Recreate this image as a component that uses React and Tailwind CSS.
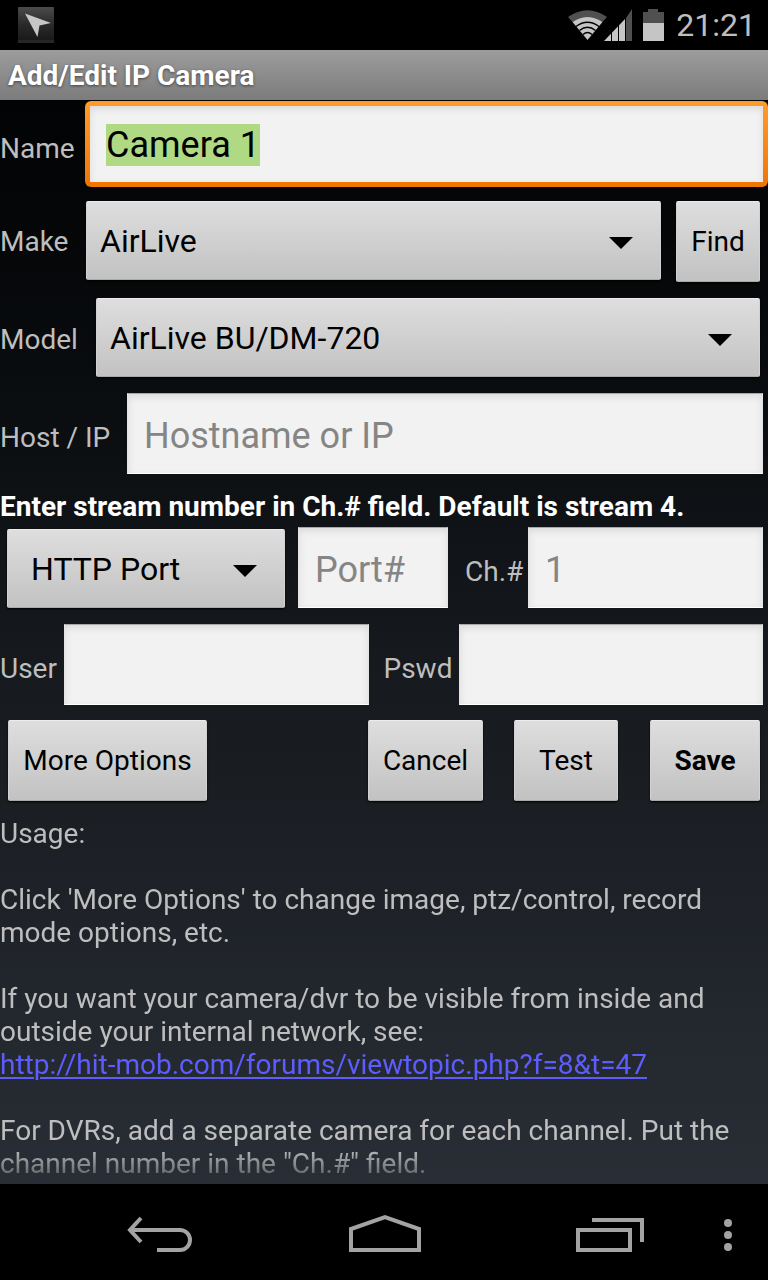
import { useEffect, useRef } from "react";
import clsx from "clsx";

const raised =
  "rounded-xs border border-t-[#eeeaee] border-x-[#d2d2d2] border-b-[#aaa] bg-linear-to-b from-[#dedede] to-[#c2c2c2] text-black shadow-[0_1px_2px_#000]";

const field =
  "h-[81px] min-w-0 border border-t-[#a8a8a8] border-x-[#e4e4e4] border-b-white bg-[#f2f2f2] px-4 pt-1 text-4xl text-black shadow-[inset_0_3px_7px_#dadada] outline-none placeholder:text-[#858585]";

function Label({ htmlFor, className, children }) {
  return (
    <label htmlFor={htmlFor} className={clsx("shrink-0 leading-[33px]", className)}>
      {children}
    </label>
  );
}

function Spinner({ id, label, options, className, selectClass }) {
  return (
    <div className={clsx("relative", className)}>
      <select
        id={id}
        aria-label={label}
        className={clsx("block h-[79px] w-full appearance-none pt-0.5 text-[32px] outline-none", raised, selectClass)}
      >
        {options.map((option) => (
          <option key={option}>{option}</option>
        ))}
      </select>
      <svg
        className="pointer-events-none absolute top-9 right-7 h-3 w-6"
        viewBox="0 0 24 12"
        aria-hidden="true"
      >
        <path d="M0 0H24L12 12Z" fill="#000" />
      </svg>
    </div>
  );
}

function Button({ className, children }) {
  return (
    <button type="button" className={clsx("h-[81px] shrink-0 text-center", raised, className)}>
      {children}
    </button>
  );
}

function StatusBar() {
  return (
    <header className="flex h-[50px] shrink-0 items-center bg-black pr-3 pl-[18px]">
      <svg className="size-9" viewBox="0 0 36 36" aria-hidden="true">
        <defs>
          <linearGradient id="tile" x2="0" y2="1">
            <stop stopColor="#4b4b4b" />
            <stop offset=".5" stopColor="#292929" />
            <stop offset="1" stopColor="#171717" />
          </linearGradient>
        </defs>
        <rect width="36" height="36" rx="1" fill="url(#tile)" />
        <rect y="33" width="36" height="3" fill="#262626" />
        <path d="M7 6.500L33 16L21.500 18.500L19.500 30Z" fill="#c6c6c6" />
      </svg>
      <svg className="ml-auto h-8 w-24" viewBox="0 0 96 32" aria-hidden="true">
        <path d="M0 8Q19.500 -5.500 39 8L34.500 13Q19.500 3 4.500 13Z" fill="#505050" />
        <path d="M4.500 13Q19.500 3 34.500 13L19.500 31Z" fill="#c5c5c5" />
        <path
          d="M8 17.500Q19.500 9 31 17.500M11.500 21.500Q19.500 15 27.500 21.500M15 25.500Q19.500 21.500 24 25.500"
          fill="none"
          stroke="#000"
          strokeWidth="1.500"
        />
        <path d="M36 32L57 10V32Z" fill="#c5c5c5" />
        <path d="M58 9L64 0V32H58Z" fill="#505050" />
        <path d="M43.500 23V32M50.500 16V32M57.500 9V32" stroke="#000" strokeWidth="1" />
        <path d="M75 3H80V0H90V3H96V14H75Z" fill="#505050" />
        <path d="M75 14H96V32H75Z" fill="#c5c5c5" />
      </svg>
      <time className="ml-3 text-[32px] leading-9 text-[#bebebe]">21:21</time>
    </header>
  );
}

function NavBar() {
  return (
    <nav className="flex h-24 shrink-0 items-center bg-black pt-1 pr-5 pl-[126px]">
      <div className="flex grow justify-between">
        <button type="button" aria-label="Back">
          <svg className="h-10 w-[68px]" viewBox="0 0 68 40" fill="none" stroke="#a3a3a3" strokeWidth="4">
            <path d="M4 16H54A10 10 0 0 1 54 36H31" />
            <path d="M15 4L4 16L15 28" />
          </svg>
        </button>
        <button type="button" aria-label="Home">
          <svg className="h-10 w-[72px]" viewBox="0 0 72 40" fill="none" stroke="#a3a3a3" strokeWidth="4">
            <path d="M2 36V15L36 3L70 15V36Z" />
          </svg>
        </button>
        <button type="button" aria-label="Recent apps">
          <svg className="h-10 w-[68px]" viewBox="0 0 68 40" fill="none" stroke="#a3a3a3" strokeWidth="4">
            <path d="M2 14H54V34H2ZM16 4H66V26" transform="translate(0 2)" />
          </svg>
        </button>
      </div>
      <button type="button" aria-label="Menu" className="ml-16 flex w-10 justify-center">
        <svg className="h-9 w-2" viewBox="0 0 8 36" fill="#a3a3a3">
          <circle cx="4" cy="7" r="4" />
          <circle cx="4" cy="19" r="4" />
          <circle cx="4" cy="31" r="4" />
        </svg>
      </button>
    </nav>
  );
}

export default function App() {
  const nameRef = useRef(null);

  useEffect(() => {
    nameRef.current.focus();
    nameRef.current.select();
  }, []);

  return (
    <div className="flex min-h-screen flex-col bg-black font-[Roboto,sans-serif] text-[28px] leading-[33px] text-[#bebebe]">
      <StatusBar />
      <h1 className="flex h-[50px] shrink-0 items-center bg-linear-to-b from-[#9c9c9c] to-[#7c7c7c] px-2 font-bold text-white text-shadow-[0_1px_3px_#444]">
        Add/Edit IP Camera
      </h1>
      <main className="flex grow flex-col bg-linear-to-b from-[#020304] via-[#15181c] to-[#292e36]">
        <form className="flex flex-col" onSubmit={(e) => e.preventDefault()}>
          <div className="flex items-center pt-px">
            <Label htmlFor="name" className="w-[85px] pt-2">Name</Label>
            <div className="min-w-0 grow rounded-md bg-linear-to-b from-[#ff9c2a] to-[#f07400] p-[5px]">
              <input
                id="name"
                ref={nameRef}
                defaultValue="Camera 1"
                className="block h-[76px] w-full bg-[#f2f2f2] px-4 pt-0.5 text-4xl text-black shadow-[inset_0_3px_7px_#dadada] outline-none selection:bg-[#b0d984] selection:text-black"
              />
            </div>
          </div>

          <div className="mt-[14px] flex items-start pr-2">
            <Label htmlFor="make" className="w-[86px] self-center">Make</Label>
            <Spinner id="make" options={["AirLive"]} className="min-w-0 grow" selectClass="pl-[13px]" />
            <Button className="ml-[15px] w-[84px]">Find</Button>
          </div>

          <div className="mt-4 flex items-center pr-2">
            <Label htmlFor="model" className="w-24 pt-1">Model</Label>
            <Spinner id="model" options={["AirLive BU/DM-720"]} className="min-w-0 grow" selectClass="pl-[13px]" />
          </div>

          <div className="mt-4 flex items-center pr-[5px]">
            <Label htmlFor="host" className="w-[127px] pt-2">Host / IP</Label>
            <input id="host" placeholder="Hostname or IP" className={clsx("grow", field)} />
          </div>

          <p className="mt-4 font-bold text-white">
            Enter stream number in Ch.# field. Default is stream 4.
          </p>

          <div className="mt-1 flex items-end pr-[5px] pl-[7px]">
            <Spinner
              label="Port type"
              options={["HTTP Port"]}
              className="w-[278px] shrink-0"
              selectClass="pl-[23px]"
            />
            <input
              aria-label="Port#"
              placeholder="Port#"
              className={clsx("ml-[13px] w-[150px] shrink-0", field)}
            />
            <Label htmlFor="channel" className="w-20 self-center pt-2 pl-[17px]">Ch.#</Label>
            <input id="channel" placeholder="1" className={clsx("w-0 grow", field)} />
          </div>

          <div className="mt-4 flex items-center pr-[5px]">
            <Label htmlFor="user" className="w-16 pt-2">User</Label>
            <input id="user" className={clsx("flex-1", field)} />
            <Label htmlFor="password" className="w-[90px] pt-2 pl-[15px]">Pswd</Label>
            <input id="password" type="password" className={clsx("flex-1", field)} />
          </div>

          <div className="mt-[15px] flex px-2">
            <Button className="w-[199px]">More Options</Button>
            <Button className="ml-auto w-[115px]">Cancel</Button>
            <Button className="ml-[31px] w-[104px]">Test</Button>
            <Button className="ml-8 w-[110px] font-bold">Save</Button>
          </div>
        </form>

        <section className="mt-4 flex flex-col gap-[33px] mask-[linear-gradient(to_top,#0003_0,#000_36px)] pb-1">
          <p>Usage:</p>
          <p>Click 'More Options' to change image, ptz/control, record mode options, etc.</p>
          <p>
            If you want your camera/dvr to be visible from inside and outside your internal network, see:
            <br />
            <a
              href="http://hit-mob.com/forums/viewtopic.php?f=8&t=47"
              className="text-[#5c5cff] underline decoration-2 underline-offset-3"
            >
              http://hit-mob.com/forums/viewtopic.php?f=8&amp;t=47
            </a>
          </p>
          <p>
            For DVRs, add a separate camera for each channel. Put the channel number in the "Ch.#" field.
          </p>
        </section>
      </main>
      <NavBar />
    </div>
  );
}
